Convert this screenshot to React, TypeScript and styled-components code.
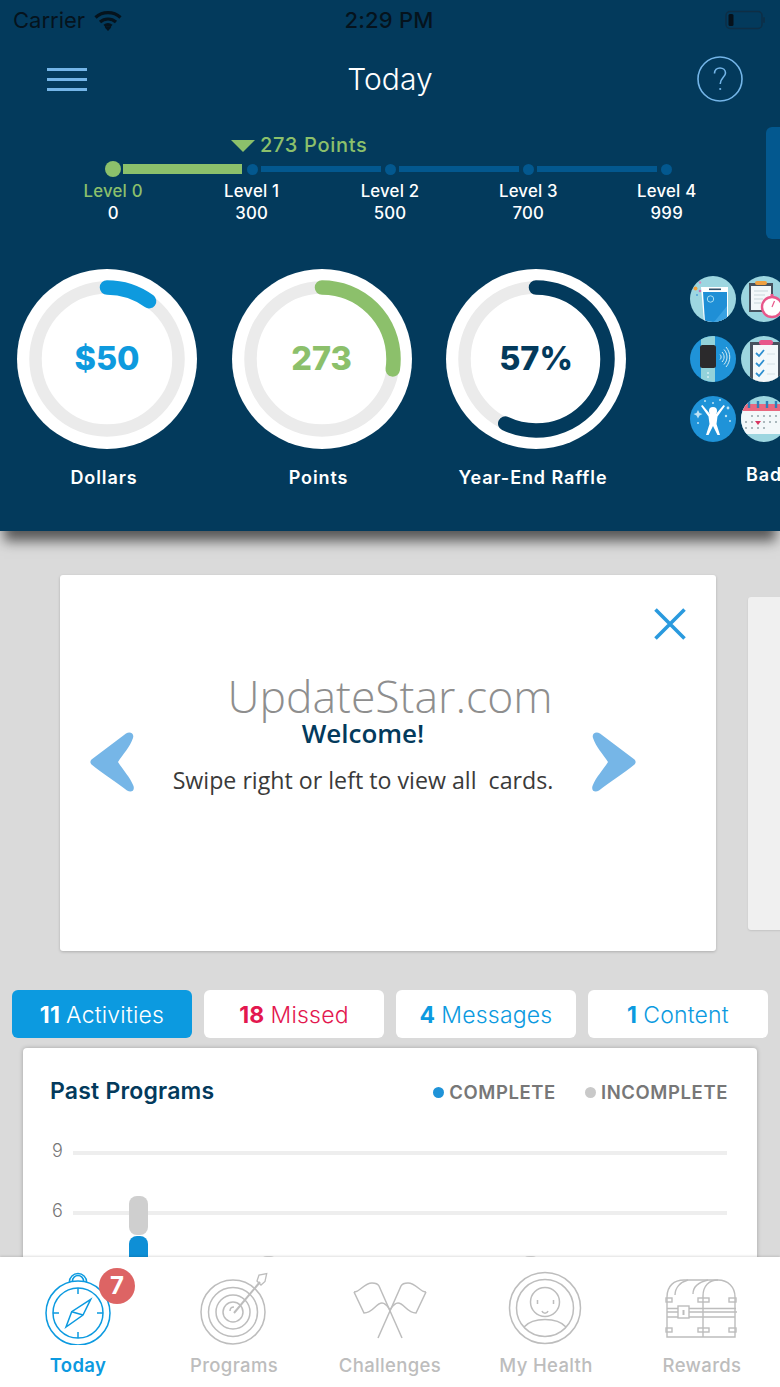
import React from 'react';
import styled, { createGlobalStyle } from 'styled-components';

const GlobalStyle = createGlobalStyle`
    html,body{
        margin:0;
        padding:0;
        background:#dadada;
    }
    *{
        box-sizing:border-box;
    }
`
const UI_FONT = `Inter, "Liberation Sans", sans-serif`
const CARD_FONT = `"Open Sans", "Noto Sans", sans-serif`
const NAVY = '#033a5c'
const BLUE = '#0c9ae0'
const GREEN = '#8cc06b'
const SKY = '#74b5e8'
const ICON_GRAY = '#bdbdbd'

const Page = styled.div`
    width:780px;
    height:1387px;
    display:flex;
    flex-direction:column;
    overflow:hidden;
    font-family:${UI_FONT};
`
const Header = styled.header`
    height:531px;
    background:${NAVY};
    overflow:hidden;
`
const HeaderShadow = styled.div`
    height:531px;
    flex:none;
    position:relative;
    z-index:2;
    box-shadow:0 14px 12px -4px rgba(0,0,0,.6);
`
const StatusBar = styled.div`
    height:40px;
    padding:0 15px 0 13px;
    display:grid;
    grid-template-columns:1fr auto 1fr;
    align-items:center;
    color:#05131d;
    font-size:22px;
`
const Carrier = styled.div`
    display:flex;
    align-items:center;
    gap:9px;
`
const Clock = styled.div`
    font-weight:500;
    letter-spacing:.2px;
`
const Battery = styled.div`
    justify-self:end;
    display:flex;
    align-items:center;
`
const TopNav = styled.div`
    height:78px;
    padding:0 37px 0 47px;
    display:flex;
    align-items:center;
    justify-content:space-between;
`
const Hamburger = styled.div`
    width:40px;
    height:23px;
    display:flex;
    flex-direction:column;
    justify-content:space-between;
    span{
        height:3px;
        background:${SKY};
    }
`
const Title = styled.h1`
    margin:0 4px 0 0;
    color:#fff;
    font-size:30px;
    font-weight:300;
`
const LevelsRow = styled.div`
    margin-top:9px;
    height:112px;
    display:flex;
`
const Levels = styled.div`
    flex:1;
`
const Peek = styled.div`
    width:14px;
    background:#03588f;
    border-radius:6px 0 0 6px;
`
const PointsLabel = styled.div`
    height:35px;
    padding-left:231px;
    display:flex;
    align-items:center;
    gap:5px;
    color:${GREEN};
    font-size:20px;
    font-weight:500;
    letter-spacing:.7px;
`
const Triangle = styled.div`
    width:0;
    height:0;
    margin-top:2px;
    border-left:12px solid transparent;
    border-right:12px solid transparent;
    border-top:12px solid ${GREEN};
`
const Track = styled.div`
    height:14px;
    margin:0 0 0 105px;
    width:590px;
    display:flex;
    align-items:center;
`
const TrackDot = styled.div<{ $active?: boolean }>`
    flex:none;
    width:${p => p.$active ? '16px' : '11px'};
    height:${p => p.$active ? '16px' : '11px'};
    border-radius:50%;
    background:${p => p.$active ? GREEN : '#03588f'};
`
const TrackSegment = styled.div<{ $active?: boolean }>`
    flex:none;
    width:${p => p.$active ? '119px' : '120px'};
    height:${p => p.$active ? '10px' : '6px'};
    margin:${p => p.$active ? '0 4.5px 0 2px' : '0 3.6px'};
    background:${p => p.$active ? GREEN : '#03588f'};
`
const LevelGrid = styled.div`
    margin:4px 0 0 44px;
    display:grid;
    grid-template-columns:repeat(5,138.4px);
`
const LevelCell = styled.div<{ $active?: boolean }>`
    text-align:center;
    color:${p => p.$active ? GREEN : '#fff'};
    font-size:16.8px;
    line-height:22px;
    font-weight:500;
    letter-spacing:.2px;
    span{
        display:block;
        color:#fff;
    }
`
const Dashboard = styled.div`
    margin-top:30px;
    padding-left:17px;
    display:flex;
`
const RingColumn = styled.div`
    width:180px;
    margin-right:34.5px;
    flex:none;
`
const Ring = styled.div`
    width:180px;
    height:180px;
    display:grid;
    place-items:center;
    svg,strong{
        grid-area:1/1;
    }
`
const RingValue = styled.strong<{ $color: string }>`
    margin:0 0 2px 0;
    color:${p => p.$color};
    font-size:32.5px;
    font-weight:800;
`
const RingLabel = styled.div`
    margin-top:18px;
    padding-right:6px;
    text-align:center;
    color:#fff;
    font-size:18px;
    line-height:22px;
    font-weight:600;
    letter-spacing:.9px;
    white-space:nowrap;
`
const BadgesColumn = styled.div`
    margin-left:29.5px;
    padding-top:7px;
    flex:none;
    width:120px;
`
const BadgeGrid = styled.div`
    display:grid;
    grid-template-columns:repeat(2,46px);
    column-gap:5px;
    row-gap:14px;
`
const Badge = styled.div<{ $bg: string }>`
    width:46px;
    height:46px;
    border-radius:50%;
    overflow:hidden;
    background:${p => p.$bg};
    svg{
        display:block;
    }
`
const BadgesLabel = styled.div`
    margin-top:22px;
    padding-left:56px;
    color:#fff;
    font-size:18px;
    line-height:22px;
    font-weight:600;
    letter-spacing:.9px;
    white-space:nowrap;
`
const Body = styled.main`
    flex:1;
    min-height:0;
    overflow:hidden;
    background:#dadada;
`
const Carousel = styled.div`
    padding:44px 0 0 60px;
    display:flex;
    align-items:center;
    gap:32px;
`
const SlideCard = styled.section`
    flex:none;
    width:656px;
    height:376px;
    background:#fff;
    border-radius:3px;
    box-shadow:0 1px 3px rgba(0,0,0,.2);
`
const NextCard = styled.div`
    flex:none;
    width:60px;
    height:333px;
    background:#f0f0f0;
    border-radius:3px;
    box-shadow:0 1px 2px rgba(0,0,0,.1);
`
const CloseRow = styled.div`
    padding:33px 30px 0 0;
    display:flex;
    justify-content:flex-end;
    svg{
        display:block;
    }
`
const Brand = styled.div`
    margin-top:32px;
    padding-left:4px;
    text-align:center;
    color:#8e8e8e;
    font-family:${CARD_FONT};
    font-size:44.5px;
    line-height:48px;
    font-weight:300;
`
const SlideRow = styled.div`
    padding:0 80px 0 30px;
    display:flex;
    align-items:flex-start;
    svg{
        flex:none;
        margin-top:12px;
    }
`
const SlideText = styled.div`
    flex:1;
    text-align:center;
    font-family:${CARD_FONT};
`
const Welcome = styled.h2`
    margin:0;
    color:${NAVY};
    font-size:26px;
    line-height:26px;
    font-weight:600;
`
const SlideMessage = styled.p`
    margin:17px 0 0;
    color:#3a3a3a;
    font-size:23.2px;
    line-height:34px;
    white-space:pre;
`
const Tabs = styled.div`
    margin-top:39px;
    padding:0 12px;
    display:grid;
    grid-template-columns:repeat(4,180px);
    gap:12px;
`
const Tab = styled.div<{ $active?: boolean; $color?: string }>`
    height:48px;
    padding-top:1px;
    border-radius:6px;
    display:flex;
    align-items:center;
    justify-content:center;
    gap:6px;
    background:${p => p.$active ? BLUE : '#fff'};
    color:${p => p.$active ? '#fff' : (p.$color || BLUE)};
    font-size:23px;
    font-weight:300;
    letter-spacing:.2px;
    b{
        font-weight:700;
    }
`
const ChartCard = styled.section`
    margin:10px 23px 0;
    height:400px;
    padding:31px 29px 0 27px;
    background:#fff;
    border-radius:4px;
    box-shadow:0 0 4px rgba(0,0,0,.25);
`
const ChartHeader = styled.div`
    height:24px;
    display:flex;
    align-items:center;
    justify-content:space-between;
`
const ChartTitle = styled.h3`
    margin:0;
    color:${NAVY};
    font-size:23px;
    font-weight:600;
    letter-spacing:.2px;
`
const Legend = styled.div`
    display:flex;
    gap:29px;
    padding-top:2px;
`
const LegendItem = styled.div<{ $dot: string }>`
    display:flex;
    align-items:center;
    gap:5px;
    color:#777;
    font-size:18.5px;
    font-weight:600;
    letter-spacing:.6px;
    &::before{
        content:'';
        width:11px;
        height:11px;
        border-radius:50%;
        background:${p => p.$dot};
    }
`
const Chart = styled.div`
    position:relative;
    margin:20px 1px 0 0;
`
const GridRow = styled.div`
    height:60px;
    display:flex;
    align-items:center;
    color:#777;
    font-size:18px;
    font-weight:300;
`
const GridLabel = styled.span`
    width:23px;
    padding-left:2px;
    margin-top:-6px;
`
const GridLine = styled.div`
    flex:1;
    height:4px;
    background:#eee;
`
const BarStack = styled.div<{ $left: number; $top: number }>`
    position:absolute;
    left:${p => p.$left}px;
    top:${p => p.$top}px;
    width:19px;
`
const BarPart = styled.div<{ $color: string; $height: number }>`
    height:${p => p.$height}px;
    background:${p => p.$color};
    border-radius:8px;
    margin-bottom:1px;
`
const TabBar = styled.nav`
    height:130px;
    flex:none;
    position:relative;
    z-index:3;
    padding-top:13px;
    display:grid;
    grid-template-columns:repeat(5,156px);
    background:#fff;
    box-shadow:0 -1px 2px rgba(0,0,0,.12);
`
const TabItem = styled.div<{ $active?: boolean }>`
    position:relative;
    display:flex;
    flex-direction:column;
    align-items:center;
    gap:8px;
    color:${p => p.$active ? BLUE : ICON_GRAY};
    font-size:18.5px;
    line-height:24px;
    font-weight:${p => p.$active ? 600 : 500};
    letter-spacing:.35px;
    svg{
        display:block;
    }
`
const CountBadge = styled.div`
    position:absolute;
    left:99px;
    top:-2px;
    width:36px;
    height:36px;
    border-radius:50%;
    display:flex;
    align-items:center;
    justify-content:center;
    background:#dd6464;
    color:#fff;
    font-size:24px;
    font-weight:700;
    letter-spacing:0;
`

const WifiIcon = () => (
    <svg width="28" height="21" viewBox="0 0 28 21" fill="none" stroke="#05131d" strokeWidth="3.2">
        <path d="M1.5 7.5C8.5 1 19.5 1 26.5 7.5" />
        <path d="M6 12C10.5 8 17.5 8 22 12" />
        <path d="M10.5 16C12.5 14.4 15.5 14.4 17.5 16" />
        <path d="M14 21L10.8 17.4C12.6 16 15.4 16 17.2 17.4Z" fill="#05131d" stroke="none" />
    </svg>
)

const BatteryIcon = () => (
    <svg width="40" height="20" viewBox="0 0 40 20" fill="none">
        <rect x="1" y="1.5" width="36" height="17" rx="4" stroke="#0e2e45" strokeWidth="1.5" />
        <rect x="3.5" y="4" width="5" height="12" rx="1.5" fill="#06111a" />
        <rect x="38.2" y="7" width="1.6" height="6" rx=".8" fill="#0e2e45" />
    </svg>
)

const HelpIcon = () => (
    <svg width="46" height="46" viewBox="0 0 46 46" fill="none" stroke={SKY} strokeWidth="1.6">
        <circle cx="23" cy="23" r="22" />
        <path d="M17.5 17.5C17.5 14 20 12 23 12C26 12 28.5 14 28.5 17C28.5 21 23.2 22 23.2 28" />
        <circle cx="23.2" cy="33" r="1.1" fill={SKY} stroke="none" />
    </svg>
)

const ProgressRing = ({ value, percent, color, label }: { value: string; percent: number; color: string; label: string }) => {
    const r = 71.5
    const c = 2 * Math.PI * r
    return (
        <RingColumn>
            <Ring>
                <svg width="180" height="180" viewBox="0 0 180 180" fill="none">
                    <circle cx="90" cy="90" r="90" fill="#fff" />
                    <circle cx="90" cy="90" r={r} stroke="#ebebeb" strokeWidth="12.5" />
                    <circle
                        cx="90"
                        cy="90"
                        r={r}
                        stroke={color}
                        strokeWidth="14.5"
                        strokeLinecap="round"
                        strokeDasharray={`${c * percent} ${c}`}
                        transform="rotate(-90 90 90)"
                    />
                </svg>
                <RingValue $color={color}>{value}</RingValue>
            </Ring>
            <RingLabel>{label}</RingLabel>
        </RingColumn>
    )
}

const PhoneBadge = () => (
    <svg width="46" height="46" viewBox="0 0 46 46">
        <path d="M11 11H38V46H14Z" fill="#fff" />
        <path d="M13 16H37V46H15Z" fill="#1f8fd6" />
        <path d="M37 30V46H24Z" fill="#3aa2e2" />
        <rect x="19" y="12.5" width="12" height="1.6" fill="#33506a" />
        <circle cx="20.5" cy="23" r="3.2" fill="none" stroke="#a9def0" strokeWidth="1" />
        <circle cx="5.5" cy="12.5" r="2" fill="#f0a040" />
        <circle cx="10" cy="6.5" r="1.2" fill="#d986b9" />
        <circle cx="10" cy="15" r="1.3" fill="#c76fb0" />
        <circle cx="7" cy="19" r="1" fill="#4fa0d8" />
    </svg>
)
const WatchBadge = () => (
    <svg width="46" height="46" viewBox="0 0 46 46">
        <rect x="8" y="7" width="24" height="29" fill="#47525e" />
        <rect x="10" y="10" width="20" height="24" fill="#f3f8fa" />
        <rect x="14" y="5" width="12" height="4" rx="2" fill="#f0a040" />
        <path d="M13 15H27M13 19H24M13 23H22M13 27H20" stroke="#c7d5da" strokeWidth="1" />
        <circle cx="31" cy="31" r="10" fill="#fff" stroke="#e8578a" strokeWidth="2.4" />
        <rect x="29.5" y="18" width="3" height="3" fill="#e8578a" />
        <path d="M31 31L33.5 25" stroke="#e8578a" strokeWidth="1.2" />
    </svg>
)
const BandBadge = () => (
    <svg width="46" height="46" viewBox="0 0 46 46">
        <rect x="11" y="0" width="14" height="46" fill="#93d2da" />
        <rect x="10" y="9" width="16" height="23" rx="2.5" fill="#2b2a2c" />
        <circle cx="18" cy="37" r="1" fill="#d6eef2" />
        <circle cx="18" cy="41" r="1" fill="#d6eef2" />
        <g fill="none" stroke="#d6eef2" strokeWidth="1">
            <path d="M30 18.5C31.5 20 31.5 22 30 23.5" />
            <path d="M32 16C34.8 19 34.8 23 32 26" />
            <path d="M34 13.5C38 18 38 24 34 28.5" />
            <path d="M36 11C41 17 41 25 36 31" />
        </g>
    </svg>
)
const ChecklistBadge = () => (
    <svg width="46" height="46" viewBox="0 0 46 46">
        <rect x="9" y="6" width="31" height="40" fill="#47525e" />
        <rect x="12" y="9" width="25" height="37" fill="#f3f8fa" />
        <rect x="18" y="4" width="14" height="5" rx="2.5" fill="#e8578a" />
        <g fill="none" stroke="#2f8fd0" strokeWidth="1.8">
            <path d="M15 17L18 20L23 14" />
            <path d="M15 27L18 30L23 24" />
            <path d="M15 37L18 40L23 34" />
        </g>
        <path d="M26 18H34M26 28H34M26 38H34" stroke="#d4e0e4" strokeWidth="1" />
    </svg>
)
const CheerBadge = () => (
    <svg width="46" height="46" viewBox="0 0 46 46">
        <circle cx="23" cy="15" r="4" fill="#fff" />
        <path d="M11 10L18.5 20.5L19.5 28L16 39H18.5L23 30L27.5 39H30L26.5 28L27.5 20.5L35 10L33.5 9L26 18H20L12.5 9Z" fill="#fff" />
        <g fill="#bfe3f5">
            <path d="M8 14L9.5 17L12.5 18L9.5 19.5L8 22.5L6.5 19.5L3.5 18L6.5 17Z" />
            <circle cx="15" cy="5" r="1" />
            <circle cx="23" cy="7" r="1" />
            <circle cx="30" cy="4" r="1" />
            <circle cx="38" cy="12" r="1.4" />
            <circle cx="36" cy="20" r="1.2" />
            <circle cx="40" cy="25" r="1" />
            <circle cx="8" cy="27" r="1" />
        </g>
    </svg>
)
const CalendarBadge = () => (
    <svg width="46" height="46" viewBox="0 0 46 46">
        <rect x="0" y="8" width="46" height="30" fill="#f3f8fa" />
        <rect x="0" y="8" width="46" height="7" fill="#e9687f" />
        <path d="M8 5V12M17 5V12M26 5V12M35 5V12" stroke="#2f7fb8" strokeWidth="2.4" />
        <g fill="#aab8bd">
            <rect x="10" y="19" width="2" height="2" /><rect x="16" y="19" width="2" height="2" /><rect x="22" y="19" width="2" height="2" /><rect x="28" y="19" width="2" height="2" /><rect x="34" y="19" width="2" height="2" />
            <rect x="4" y="25" width="2" height="2" /><rect x="10" y="25" width="2" height="2" /><rect x="22" y="25" width="2" height="2" /><rect x="28" y="25" width="2" height="2" /><rect x="34" y="25" width="2" height="2" />
            <rect x="4" y="31" width="2" height="2" /><rect x="10" y="31" width="2" height="2" /><rect x="16" y="31" width="2" height="2" /><rect x="22" y="31" width="2" height="2" />
        </g>
        <path d="M14 25H20L17 29Z" fill="#d8345f" />
    </svg>
)

const CloseIcon = () => (
    <svg width="32" height="32" viewBox="0 0 32 32" fill="none" stroke="#2a9ade" strokeWidth="3.6">
        <path d="M1.5 1.5L30.5 30.5M30.5 1.5L1.5 30.5" />
    </svg>
)
const ArrowLeft = () => (
    <svg width="44" height="60" viewBox="0 0 44 60">
        <path d="M1.5 27.5L36 1.5C40 -1 44.5 1.5 43 6C40 15 33 22 28 30C33 38 40 45 43.5 54C45 59 41 61 37 58.5C26 50 12 41 1.5 32.5C0 31 0 29 1.5 27.5Z" fill="#76b6e7" />
    </svg>
)
const ArrowRight = () => (
    <svg width="44" height="60" viewBox="0 0 44 60">
        <path d="M42.5 27.5L8 1.5C4 -1 -.5 1.5 1 6C4 15 11 22 16 30C11 38 4 45 .5 54C-1 59 3 61 7 58.5C18 50 32 41 42.5 32.5C44 31 44 29 42.5 27.5Z" fill="#76b6e7" />
    </svg>
)

const CompassIcon = () => (
    <svg width="100" height="75" viewBox="0 0 100 75" fill="none" stroke={BLUE} strokeWidth="1.5">
        <path d="M41.4 12A8.6 8.6 0 0 1 58.6 12" />
        <path d="M44.5 11A5.5 5.5 0 0 1 55.5 11" />
        <circle cx="50" cy="43" r="32" />
        <circle cx="50" cy="43" r="25" />
        <path d="M50 18V24M50 62V68M25 43H31M69 43H75" />
        <path d="M62.7 29.3L55 45L38 57L43.7 41.7Z" />
        <path d="M43.7 41.7L55 45" />
    </svg>
)
const TargetIcon = () => (
    <svg width="100" height="75" viewBox="0 0 100 75" fill="none" stroke={ICON_GRAY} strokeWidth="1.5">
        <circle cx="49" cy="42" r="32" />
        <circle cx="49" cy="42" r="24.5" />
        <circle cx="49" cy="42" r="17" />
        <circle cx="49" cy="42" r="10" />
        <path d="M46 41C46 38 48 37 50 37" />
        <path d="M50 43L76 12" strokeWidth="2" />
        <path d="M73 11L75 5L82.7 3.5L81 11.5L77 15Z" strokeWidth="1.3" />
    </svg>
)
const FlagsIcon = () => (
    <svg width="100" height="75" viewBox="0 0 100 75" fill="none" stroke={ICON_GRAY} strokeWidth="1.5">
        <path d="M14 22C20 22 24 13 32 13C35 13 38 14 39 16L62 68" />
        <path d="M14 22L24 43C33 43 36 33 42 33C46 33 48 37 50 40" />
        <path d="M86 22C80 22 76 13 68 13C65 13 62 14 61 16L38 68" />
        <path d="M86 22L76 43C67 43 64 33 58 33C54 33 52 37 50 40" />
    </svg>
)
const FaceIcon = () => (
    <svg width="100" height="75" viewBox="0 0 100 75" fill="none" stroke={ICON_GRAY} strokeWidth="1.5">
        <circle cx="49" cy="38" r="35.5" />
        <circle cx="49" cy="38" r="28.5" />
        <circle cx="49" cy="32" r="14.5" />
        <path d="M41.5 30V34M57.5 30V34" />
        <path d="M46 41C47 44 51 44 52 41" />
        <path d="M28 57C37 47 61 47 70 57" />
    </svg>
)
const ChestIcon = () => (
    <svg width="100" height="75" viewBox="0 0 100 75" fill="none" stroke={ICON_GRAY} strokeWidth="1.4">
        <path d="M15 67V27C15 16 22 10 32 10H66C76 10 83 17 83 27V67Z" />
        <path d="M51 67V26C51 16 57 10 66 10" />
        <path d="M23 25C23 18 28 12 36 10M41 24C41 17 47 12 56 10" />
        <path d="M15 38.5H26M37 38.5H84M15 42H26M37 42H85M15 47H26M37 47H83" />
        <rect x="26" y="36" width="11" height="12" />
        <path d="M31.5 40V45" strokeWidth="2" />
        <rect x="14" y="28" width="6" height="4" />
        <rect x="46" y="28" width="11" height="4" />
        <rect x="77" y="28" width="7" height="4" />
        <rect x="14" y="58" width="6" height="4" />
        <rect x="46" y="58" width="11" height="4" />
        <rect x="77" y="58" width="7" height="4" />
    </svg>
)

const levels = [
    { name: 'Level 0', points: '0' },
    { name: 'Level 1', points: '300' },
    { name: 'Level 2', points: '500' },
    { name: 'Level 3', points: '700' },
    { name: 'Level 4', points: '999' },
]

const badges = [
    { bg: '#9dd6e0', art: <PhoneBadge /> },
    { bg: '#9dd6e0', art: <WatchBadge /> },
    { bg: '#1f93d8', art: <BandBadge /> },
    { bg: '#9dd6e0', art: <ChecklistBadge /> },
    { bg: '#1f93d8', art: <CheerBadge /> },
    { bg: '#9dd6e0', art: <CalendarBadge /> },
]

export default function App() {
    return (
        <Page>
            <GlobalStyle />
            <HeaderShadow>
                <Header>
                    <StatusBar>
                        <Carrier>Carrier <WifiIcon /></Carrier>
                        <Clock>2:29 PM</Clock>
                        <Battery><BatteryIcon /></Battery>
                    </StatusBar>
                    <TopNav>
                        <Hamburger><span /><span /><span /></Hamburger>
                        <Title>Today</Title>
                        <HelpIcon />
                    </TopNav>
                    <LevelsRow>
                        <Levels>
                            <PointsLabel><Triangle />273 Points</PointsLabel>
                            <Track>
                                <TrackDot $active />
                                <TrackSegment $active />
                                <TrackDot />
                                <TrackSegment />
                                <TrackDot />
                                <TrackSegment />
                                <TrackDot />
                                <TrackSegment />
                                <TrackDot />
                            </Track>
                            <LevelGrid>
                                {levels.map((level, i) => (
                                    <LevelCell key={level.name} $active={i === 0}>
                                        {level.name}
                                        <span>{level.points}</span>
                                    </LevelCell>
                                ))}
                            </LevelGrid>
                        </Levels>
                        <Peek />
                    </LevelsRow>
                    <Dashboard>
                        <ProgressRing value="$50" percent={0.1} color="#0e9ade" label="Dollars" />
                        <ProgressRing value="273" percent={0.273} color={GREEN} label="Points" />
                        <ProgressRing value="57%" percent={0.57} color={NAVY} label="Year-End Raffle" />
                        <BadgesColumn>
                            <BadgeGrid>
                                {badges.map((badge, i) => (
                                    <Badge key={i} $bg={badge.bg}>{badge.art}</Badge>
                                ))}
                            </BadgeGrid>
                            <BadgesLabel>Badges</BadgesLabel>
                        </BadgesColumn>
                    </Dashboard>
                </Header>
            </HeaderShadow>
            <Body>
                <Carousel>
                    <SlideCard>
                        <CloseRow><CloseIcon /></CloseRow>
                        <Brand>UpdateStar.com</Brand>
                        <SlideRow>
                            <ArrowLeft />
                            <SlideText>
                                <Welcome>Welcome!</Welcome>
                                <SlideMessage>Swipe right or left to view all  cards.</SlideMessage>
                            </SlideText>
                            <ArrowRight />
                        </SlideRow>
                    </SlideCard>
                    <NextCard />
                </Carousel>
                <Tabs>
                    <Tab $active><b>11</b> Activities</Tab>
                    <Tab $color="#e3174f"><b>18</b> Missed</Tab>
                    <Tab><b>4</b> Messages</Tab>
                    <Tab><b>1</b> Content</Tab>
                </Tabs>
                <ChartCard>
                    <ChartHeader>
                        <ChartTitle>Past Programs</ChartTitle>
                        <Legend>
                            <LegendItem $dot="#1f93d8">COMPLETE</LegendItem>
                            <LegendItem $dot="#c9c9c9">INCOMPLETE</LegendItem>
                        </Legend>
                    </ChartHeader>
                    <Chart>
                        <GridRow><GridLabel>9</GridLabel><GridLine /></GridRow>
                        <GridRow><GridLabel>6</GridLabel><GridLine /></GridRow>
                        <GridRow><GridLabel>3</GridLabel><GridLine /></GridRow>
                        <BarStack $left={79} $top={73}>
                            <BarPart $color="#cfcfcf" $height={39} />
                            <BarPart $color="#0e8fd6" $height={60} />
                        </BarStack>
                        <BarStack $left={209} $top={133}>
                            <BarPart $color="#d8d8d8" $height={20} />
                        </BarStack>
                        <BarStack $left={471} $top={133}>
                            <BarPart $color="#d8d8d8" $height={20} />
                        </BarStack>
                    </Chart>
                </ChartCard>
            </Body>
            <TabBar>
                <TabItem $active>
                    <CompassIcon />
                    Today
                    <CountBadge>7</CountBadge>
                </TabItem>
                <TabItem><TargetIcon />Programs</TabItem>
                <TabItem><FlagsIcon />Challenges</TabItem>
                <TabItem><FaceIcon />My Health</TabItem>
                <TabItem><ChestIcon />Rewards</TabItem>
            </TabBar>
        </Page>
    )
}
